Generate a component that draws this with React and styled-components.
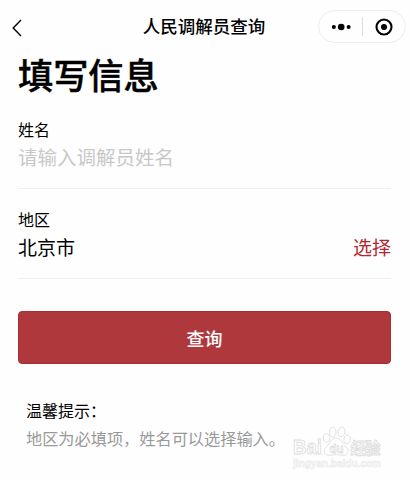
import { useState } from "react";
import styled, { createGlobalStyle } from "styled-components";

const GlobalStyle = createGlobalStyle`
  * { box-sizing: border-box; }
  body {
    margin: 0;
    background: #fefefe;
    color: #000;
    font-family: "Noto Sans CJK SC", sans-serif;
  }
`;

const App = () => {
  const [name, setName] = useState("");

  return (
    <Page>
      <GlobalStyle />
      <NavBar>
        <BackIcon viewBox="0 0 10 18">
          <path d="M9 1L1.2 9L9 17" />
        </BackIcon>
        <NavTitle>人民调解员查询</NavTitle>
        <Capsule>
          <DotsIcon viewBox="0 0 20 8">
            <circle cx="1.9" cy="4" r="2" />
            <circle cx="9.2" cy="4" r="3.3" />
            <circle cx="16.6" cy="4" r="2" />
          </DotsIcon>
          <Divider />
          <CloseIcon viewBox="0 0 18 18">
            <circle cx="9" cy="9" r="7.5" fill="none" stroke="#000" strokeWidth="2.1" />
            <circle cx="9" cy="9" r="3" />
          </CloseIcon>
        </Capsule>
      </NavBar>
      <Content>
        <Title>填写信息</Title>
        <Field>
          <Label>姓名</Label>
          <Input
            placeholder="请输入调解员姓名"
            value={name}
            onChange={e => setName(e.target.value)}
          />
        </Field>
        <Field $last>
          <Label>地区</Label>
          <Row>
            <span>北京市</span>
            <Select>选择</Select>
          </Row>
        </Field>
        <Submit>查询</Submit>
        <Tips>
          <TipsTitle>温馨提示：</TipsTitle>
          <TipsText>地区为必填项，姓名可以选择输入。</TipsText>
        </Tips>
      </Content>
      <Watermark viewBox="0 0 100 50">
        <text x="3" y="29" fontSize="20" textLength="29" lengthAdjust="spacingAndGlyphs">Bai</text>
        <ellipse cx="36.5" cy="13" rx="3.2" ry="4.3" />
        <ellipse cx="42.7" cy="7" rx="3.4" ry="4.8" />
        <ellipse cx="51.5" cy="7" rx="3.4" ry="4.8" transform="rotate(10 51.5 7)" />
        <ellipse cx="57.2" cy="14.5" rx="3.2" ry="4.2" transform="rotate(15 57.2 14.5)" />
        <path d="M46 13C51 13 51 17.500 56 21.500C60 25.500 58.500 30.800 53 30.300C49 29.500 44 29.500 40 30.300C34 30.800 32.500 25.500 36.500 21.500C41 17.500 41 13 46 13Z" />
        <text x="39.500" y="27.500" fontSize="13" textLength="14" lengthAdjust="spacingAndGlyphs">du</text>
        <text className="cjk" x="60.500" y="29" fontSize="15.500" textLength="30">经验</text>
        <text className="url" x="3" y="42" fontSize="10.500" textLength="88" lengthAdjust="spacingAndGlyphs">jingyan.baidu.com</text>
      </Watermark>
    </Page>
  );
};

const Page = styled.div`
  position: relative;
  width: 410px;
  height: 480px;
  overflow: hidden;
`;

const NavBar = styled.header`
  display: grid;
  grid-template-columns: 1fr auto 1fr;
  align-items: center;
  height: 52px;
  padding: 1px 4px 0 12px;
`;

const BackIcon = styled.svg`
  width: 10px;
  height: 18px;
  margin-top: 3px;
  fill: none;
  stroke: #000;
  stroke-width: 1.4;
`;

const NavTitle = styled.div`
  margin: 0 0 2px -10px;
  font-size: 17.5px;
  font-weight: 500;
  line-height: 26px;
`;

const Capsule = styled.div`
  justify-self: end;
  display: flex;
  align-items: center;
  width: 88px;
  height: 33px;
  padding: 0 13px;
  border: 1px solid #ededed;
  border-radius: 17px;
`;

const DotsIcon = styled.svg`
  flex: none;
  width: 20px;
  height: 8px;
`;

const Divider = styled.i`
  flex: none;
  width: 1px;
  height: 19px;
  margin: 0 12px 0 10px;
  background: #ddd;
`;

const CloseIcon = styled.svg`
  flex: none;
  width: 18px;
  height: 18px;
`;

const Content = styled.main`
  padding: 0 19px 0 18px;
`;

const Title = styled.h1`
  margin: -2px 0 19px;
  font-size: 35.2px;
  font-weight: 500;
  line-height: 48px;
  -webkit-text-stroke: 0.5px #000;
`;

const Field = styled.div`
  height: 72px;
  margin-bottom: ${props => (props.$last ? "32px" : "18px")};
  border-bottom: 1px solid #f0f0f0;
`;

const Label = styled.div`
  font-size: 16px;
  line-height: 24px;
`;

const Input = styled.input`
  display: block;
  width: 100%;
  height: 31px;
  padding: 0;
  border: 0;
  outline: 0;
  background: none;
  font: 19.5px "Noto Sans CJK SC", sans-serif;

  &::placeholder {
    color: #c8c8c8;
  }
`;

const Row = styled.div`
  display: flex;
  justify-content: space-between;
  font-size: 19px;
  line-height: 31px;
`;

const Select = styled.span`
  color: #af272f;
`;

const Submit = styled.button`
  display: block;
  width: 100%;
  height: 53px;
  padding: 0;
  border: 1px solid #a92e34;
  border-radius: 4px;
  background: #af383d;
  color: #fff;
  font: 500 18px "Noto Sans CJK SC", sans-serif;
`;

const Tips = styled.section`
  padding: 32px 0 0 8px;
`;

const TipsTitle = styled.div`
  font-size: 16px;
  line-height: 28px;
`;

const TipsText = styled.div`
  color: #999;
  font-size: 16.2px;
  line-height: 28px;
  white-space: nowrap;
`;

const Watermark = styled.svg`
  position: absolute;
  left: 290px;
  top: 425px;
  width: 100px;
  height: 50px;
  fill: #fefefe;
  stroke: #dedede;
  stroke-width: 0.9;
  font-family: "Liberation Sans", Arial, sans-serif;
  font-weight: 700;

  .cjk {
    font-family: "Noto Sans CJK SC", sans-serif;
  }

  .url {
    fill: #f8f8f8;
    stroke: #e8e8e8;
    stroke-width: 0.5;
  }
`;

export default App;
